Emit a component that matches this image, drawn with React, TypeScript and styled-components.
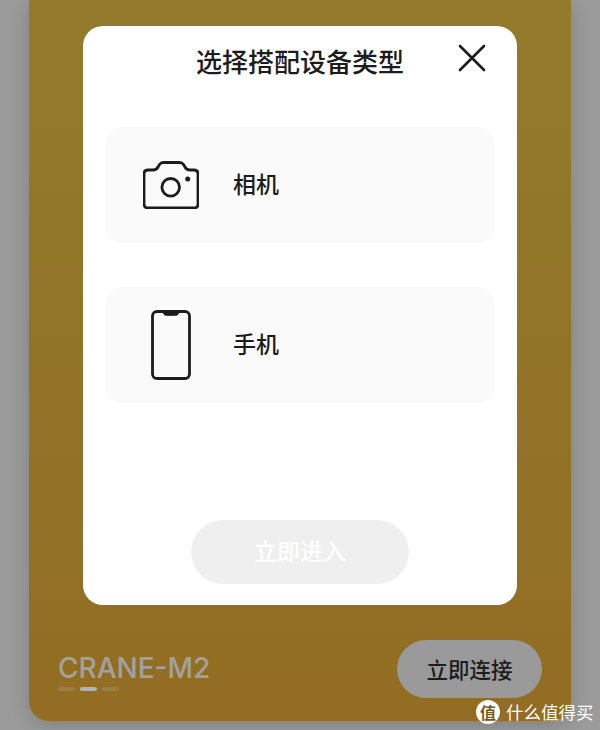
import styled, { createGlobalStyle } from "styled-components";

const GlobalStyle = createGlobalStyle`
  html, body {
    margin: 0;
    padding: 0;
    background: #9b9b9b;
    font-family: "Noto Sans CJK SC", "Liberation Sans", sans-serif;
  }
`;

const Page = styled.div`
  position: relative;
  width: 600px;
  height: 730px;
  padding: 0 29px;
  box-sizing: border-box;
  overflow: hidden;
  background: #9b9b9b;
`;

const Card = styled.div`
  height: 721px;
  padding: 26px 54px 0;
  box-sizing: border-box;
  display: flex;
  flex-direction: column;
  border-radius: 0 0 20px 20px;
  background: linear-gradient(180deg, #937b2b 0%, #926d23 100%);
  box-shadow: 0 4px 18px rgba(60, 60, 60, 0.28);
`;

const Modal = styled.div`
  height: 579px;
  padding: 0 23px 21px;
  box-sizing: border-box;
  display: flex;
  flex-direction: column;
  border-radius: 20px;
  background: #ffffff;
`;

const ModalHeader = styled.div`
  position: relative;
  height: 101px;
  padding-top: 17px;
  box-sizing: border-box;
  text-align: center;
`;

const Title = styled.h2`
  margin: 0;
  font-size: 26px;
  line-height: 36px;
  font-weight: 500;
  color: #1c1c1c;
`;

const CloseButton = styled.button`
  position: absolute;
  top: 18px;
  right: 8px;
  width: 28px;
  height: 28px;
  padding: 0;
  border: none;
  background: none;
  display: flex;
`;

const Options = styled.div`
  display: flex;
  flex-direction: column;
  gap: 44px;
`;

const Option = styled.div`
  height: 116px;
  display: flex;
  align-items: center;
  border-radius: 16px;
  background: #fafafa;
`;

const IconSlot = styled.div`
  width: 127px;
  display: flex;
  justify-content: center;
  padding-left: 3px;
  box-sizing: border-box;
`;

const OptionLabel = styled.span`
  margin-bottom: 4px;
  font-size: 23px;
  line-height: 32px;
  font-weight: 500;
  color: #1c1c1c;
`;

const EnterButton = styled.button`
  margin: auto auto 0;
  width: 218px;
  height: 64px;
  padding: 0 0 5px;
  border: none;
  border-radius: 32px;
  background: #efefef;
  color: #ffffff;
  font-family: inherit;
  font-size: 23px;
  font-weight: 500;
`;

const Footer = styled.div`
  flex: 1;
  margin: 0 -25px;
  display: flex;
  justify-content: space-between;
  align-items: flex-start;
`;

const DeviceInfo = styled.div`
  padding-top: 47px;
  display: flex;
  flex-direction: column;
`;

const DeviceName = styled.div`
  font-family: "Inter", "Liberation Sans", sans-serif;
  font-size: 28px;
  font-weight: 500;
  line-height: 32px;
  color: #a2a2a0;
`;

const Dots = styled.div`
  margin-top: 3px;
  display: flex;
  gap: 5px;
`;

const Dot = styled.span<{ $active?: boolean }>`
  width: 17px;
  height: 4px;
  border-radius: 2px;
  background: ${(p) => (p.$active ? "#b4b4b4" : "#9a8040")};
`;

const ConnectButton = styled.button`
  margin-top: 35px;
  width: 145px;
  height: 58px;
  padding: 0 0 1px;
  border: none;
  border-radius: 29px;
  background: #9a9a9a;
  color: #1c1c1c;
  font-family: inherit;
  font-size: 21.5px;
  font-weight: 500;
`;

const Watermark = styled.div`
  position: absolute;
  left: 476px;
  top: 700px;
  display: flex;
  align-items: center;
  gap: 6px;
  color: #ffffff;
  font-size: 17.5px;
  line-height: 24px;
  white-space: nowrap;
`;

const WatermarkBadge = styled.span`
  width: 24px;
  height: 24px;
  border-radius: 50%;
  background: #ffffff;
  color: #7a5a1c;
  font-size: 16px;
  font-weight: 700;
  line-height: 24px;
  text-align: center;
`;

function CloseIcon() {
  return (
    <svg width="28" height="28" viewBox="0 0 28 28" fill="none">
      <path d="M2 2 L26 26 M26 2 L2 26" stroke="#1c1c1c" strokeWidth="2.6" strokeLinecap="round" />
    </svg>
  );
}

function CameraIcon() {
  return (
    <svg width="56" height="48" viewBox="0 0 56 48" fill="none" stroke="#1c1c1c" strokeWidth="2.8">
      <path
        d="M5 9 H10 C12.5 9 14 8 15 6 L16.5 3.5 C17.5 2 18.5 1.5 20.5 1.5 H36.5 C38.5 1.5 39.5 2 40.5 3.5 L42 6 C43 8 44.5 9 47 9 H51 C53.5 9 55 10.5 55 13 V43 C55 45.5 53.5 47 51 47 H5 C2.5 47 1 45.5 1 43 V13 C1 10.5 2.5 9 5 9 Z"
        strokeLinejoin="round"
      />
      <circle cx="27.7" cy="26.3" r="8.8" />
      <circle cx="44.7" cy="18" r="2.5" fill="#1c1c1c" stroke="none" />
    </svg>
  );
}

function PhoneIcon() {
  return (
    <svg width="40" height="70" viewBox="0 0 40 70" fill="none" stroke="#1c1c1c" strokeWidth="2.8">
      <rect x="1.5" y="1.5" width="37" height="67" rx="4.5" />
      <path d="M12 2 C12.5 4.5 13.5 5.3 15.5 5.3 H24.5 C26.5 5.3 27.5 4.5 28 2 Z" fill="#1c1c1c" strokeWidth="1" />
    </svg>
  );
}

export default function App() {
  return (
    <>
      <GlobalStyle />
      <Page>
        <Card>
          <Modal>
            <ModalHeader>
              <Title>选择搭配设备类型</Title>
              <CloseButton>
                <CloseIcon />
              </CloseButton>
            </ModalHeader>
            <Options>
              <Option>
                <IconSlot>
                  <CameraIcon />
                </IconSlot>
                <OptionLabel>相机</OptionLabel>
              </Option>
              <Option>
                <IconSlot>
                  <PhoneIcon />
                </IconSlot>
                <OptionLabel>手机</OptionLabel>
              </Option>
            </Options>
            <EnterButton>立即进入</EnterButton>
          </Modal>
          <Footer>
            <DeviceInfo>
              <DeviceName>CRANE-M2</DeviceName>
              <Dots>
                <Dot />
                <Dot $active />
                <Dot />
              </Dots>
            </DeviceInfo>
            <ConnectButton>立即连接</ConnectButton>
          </Footer>
        </Card>
        <Watermark>
          <WatermarkBadge>值</WatermarkBadge>
          <span>什么值得买</span>
        </Watermark>
      </Page>
    </>
  );
}
